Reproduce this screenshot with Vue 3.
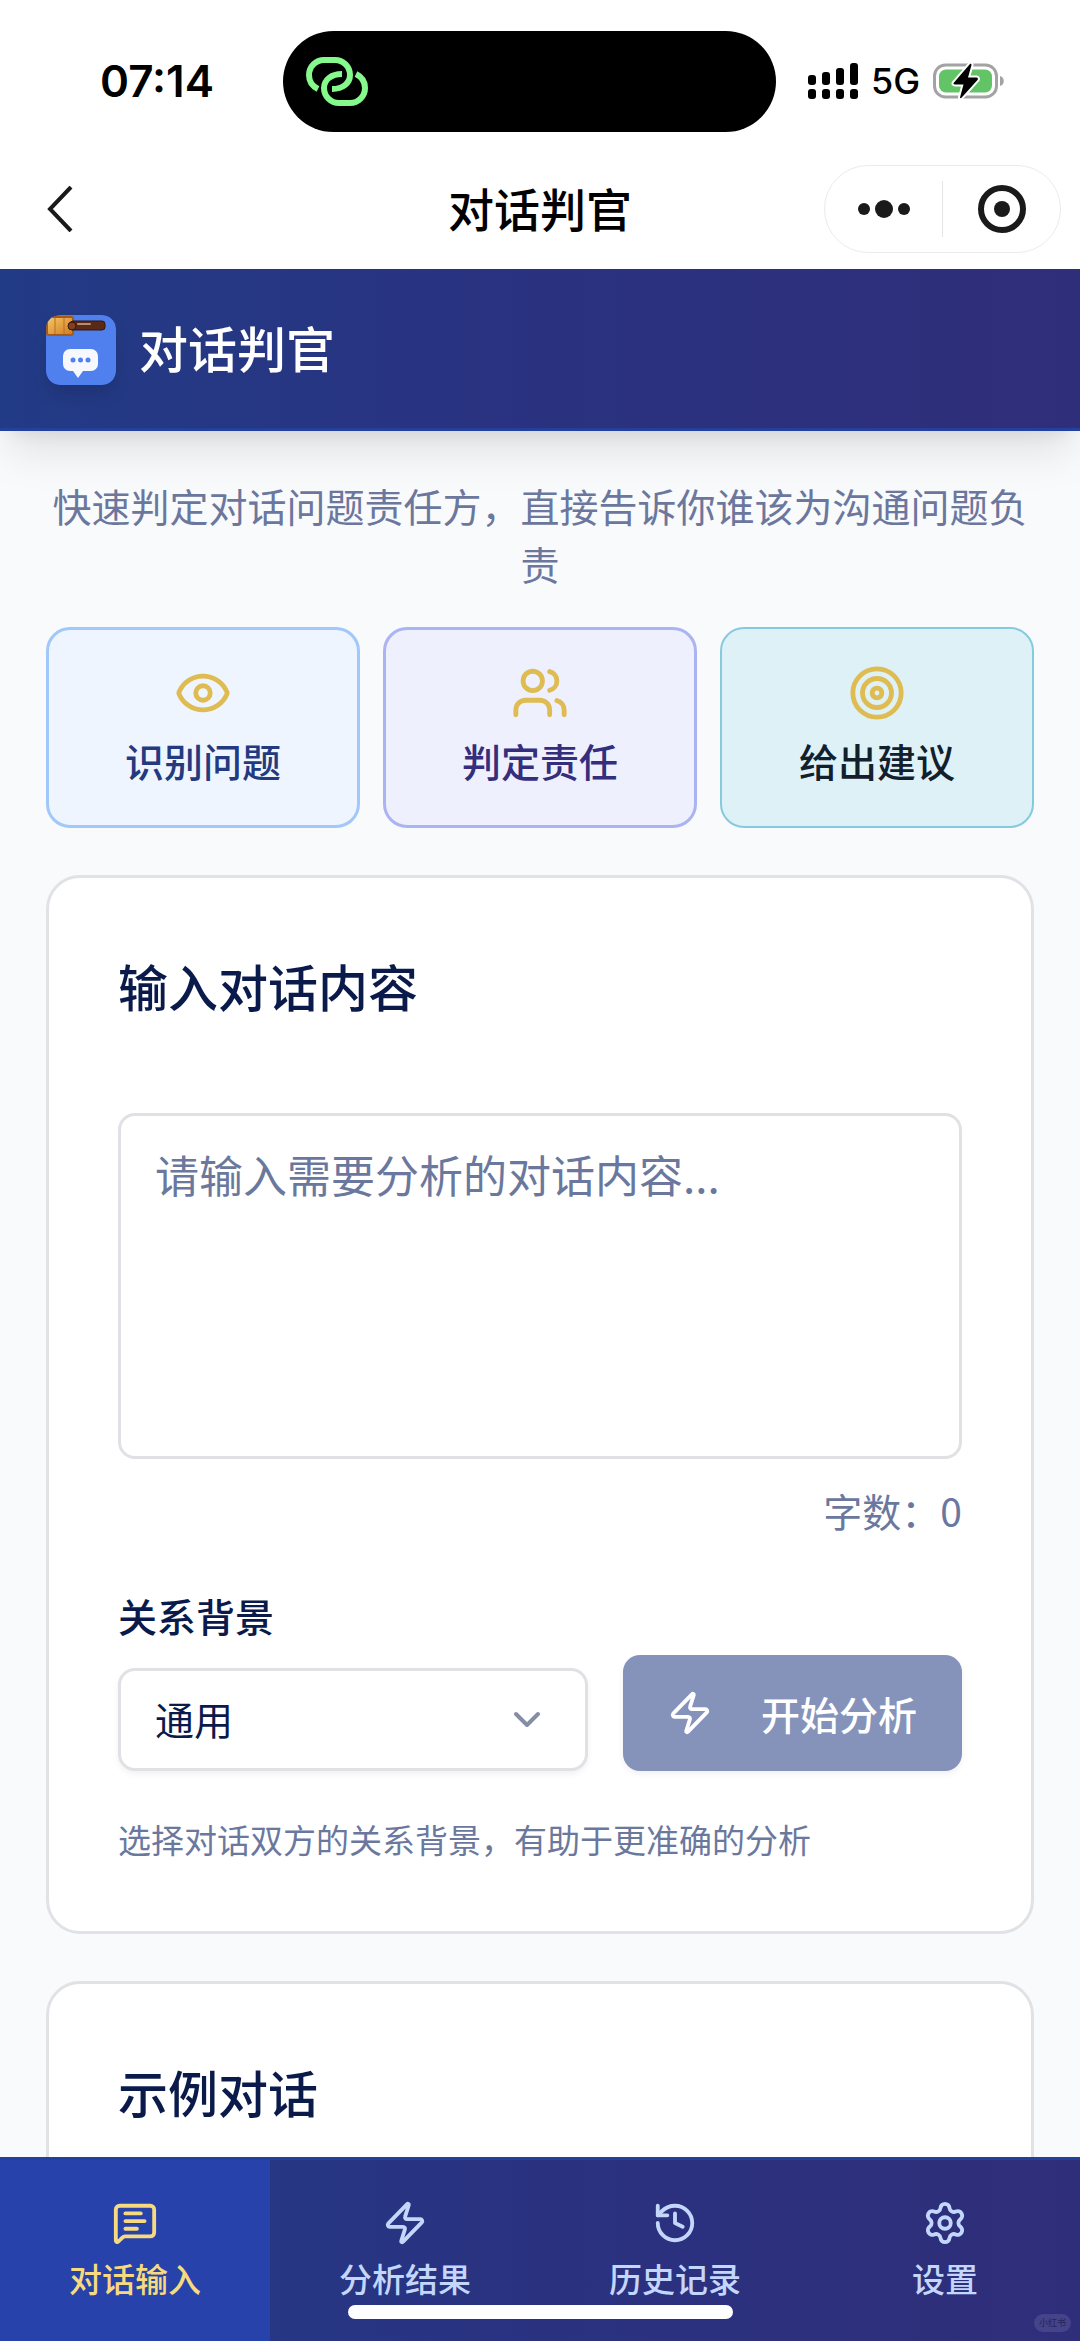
<script setup>
import { ref, computed } from 'vue'

const dialogue = ref('')
const relation = ref('general')
const activeTab = ref('input')
const wordCount = computed(() => dialogue.value.length)

const features = [
  {
    tone: 'blue',
    label: '识别问题',
    paths: [
      'M2.062 12.348a1 1 0 0 1 0-.696 10.75 10.75 0 0 1 19.876 0 1 1 0 0 1 0 .696 10.75 10.75 0 0 1-19.876 0'
    ],
    circles: [[12, 12, 3]]
  },
  {
    tone: 'indigo',
    label: '判定责任',
    paths: [
      'M16 21v-2a4 4 0 0 0-4-4H6a4 4 0 0 0-4 4v2',
      'M16 3.128a4 4 0 0 1 0 7.744',
      'M22 21v-2a4 4 0 0 0-3-3.87'
    ],
    circles: [[9, 7, 4]]
  },
  {
    tone: 'cyan',
    label: '给出建议',
    paths: [],
    circles: [[12, 12, 10], [12, 12, 6], [12, 12, 2]]
  }
]

const zap =
  'M4 14a1 1 0 0 1-.78-1.63l9.9-10.2a.5.5 0 0 1 .86.46l-1.92 6.02A1 1 0 0 0 13 10h7a1 1 0 0 1 .78 1.63l-9.9 10.2a.5.5 0 0 1-.86-.46l1.92-6.02A1 1 0 0 0 11 14z'

const tabs = [
  {
    id: 'input',
    label: '对话输入',
    paths: [
      'M22 17a2 2 0 0 1-2 2H6.828a2 2 0 0 0-1.414.586l-2.202 2.202A.71.71 0 0 1 2 21.286V5a2 2 0 0 1 2-2h16a2 2 0 0 1 2 2z',
      'M7 11h10',
      'M7 15h6',
      'M7 7h8'
    ]
  },
  { id: 'result', label: '分析结果', paths: [zap] },
  {
    id: 'history',
    label: '历史记录',
    paths: ['M3 12a9 9 0 1 0 9-9 9.75 9.75 0 0 0-6.74 2.74L3 8', 'M3 3v5h5', 'M12 7v5l4 2']
  },
  {
    id: 'settings',
    label: '设置',
    paths: [
      'M9.671 4.136a2.34 2.34 0 0 1 4.659 0 2.34 2.34 0 0 0 3.319 1.915 2.34 2.34 0 0 1 2.33 4.033 2.34 2.34 0 0 0 0 3.831 2.34 2.34 0 0 1-2.33 4.033 2.34 2.34 0 0 0-3.319 1.915 2.34 2.34 0 0 1-4.659 0 2.34 2.34 0 0 0-3.32-1.915 2.34 2.34 0 0 1-2.33-4.033 2.34 2.34 0 0 0 0-3.831A2.34 2.34 0 0 1 6.35 6.051a2.34 2.34 0 0 0 3.319-1.915',
      'M12 9a3 3 0 1 0 0 6 3 3 0 0 0 0-6'
    ]
  }
]
</script>

<template>
  <div class="screen">
    <div class="status">
      <div class="clock">07:14</div>
      <div class="island">
        <svg width="62" height="49" viewBox="0 0 62 49" fill="none" stroke="#86f98c" stroke-width="6">
          <path d="M12 32C6 29 3 24 3 18A15 15 0 0 1 18 3H29A15 15 0 0 1 44 18C44 26 37 32 26 32" />
          <path d="M50 17C56 20 59 25 59 31A15 15 0 0 1 44 46H33A15 15 0 0 1 18 31C18 23 25 17 36 17" />
        </svg>
      </div>
      <div class="signals">
        <svg width="50" height="36" viewBox="0 0 50 36">
          <rect x="0" y="12" width="8" height="10" rx="3" />
          <rect x="14" y="9" width="8" height="13" rx="3" />
          <rect x="28" y="5" width="8" height="17" rx="3" />
          <rect x="42" y="0" width="8" height="22" rx="3" />
          <rect x="0" y="26" width="8" height="10" rx="3" />
          <rect x="14" y="26" width="8" height="10" rx="3" />
          <rect x="28" y="26" width="8" height="10" rx="3" />
          <rect x="42" y="26" width="8" height="10" rx="3" />
        </svg>
        <span class="network">5G</span>
        <svg width="72" height="36" viewBox="0 0 72 36">
          <rect x="1.5" y="2" width="62" height="32" rx="11" fill="none" stroke="#a3a3a3" stroke-width="3" />
          <rect x="6" y="6.500" width="53" height="23" rx="7" fill="#62c466" />
          <path d="M67 13c5 1 5 9 0 10z" fill="#a3a3a3" />
          <path
            d="M37 1 21 19.500c-1 1-.5 2 1 2h8.500L27 34.500c0 1 .8 1 1.500.3L44.500 17c1-1 .4-2.500-1-2.500H35L38.500 2c.2-1-.8-1.800-1.500-1z"
            fill="#000"
            stroke="#fff"
            stroke-width="4"
            paint-order="stroke"
          />
        </svg>
      </div>
    </div>

    <div class="titlebar">
      <button class="back" type="button" aria-label="返回">
        <svg width="26" height="46" viewBox="0 0 26 46" fill="none" stroke="#1a1a1a" stroke-width="4">
          <path d="M24 1 3 23l21 22" />
        </svg>
      </button>
      <div class="page-title">对话判官</div>
      <div class="capsule">
        <button type="button" aria-label="更多">
          <svg width="52" height="20" viewBox="0 0 52 20" fill="#1a1a1a">
            <circle cx="6" cy="10" r="6" />
            <circle cx="26" cy="10" r="9" />
            <circle cx="46" cy="10" r="6" />
          </svg>
        </button>
        <span class="divider"></span>
        <button type="button" aria-label="关闭">
          <svg width="48" height="48" viewBox="0 0 48 48">
            <circle cx="24" cy="24" r="21" fill="none" stroke="#1a1a1a" stroke-width="6" />
            <circle cx="24" cy="24" r="8" fill="#1a1a1a" />
          </svg>
        </button>
      </div>
    </div>

    <header class="banner">
      <svg class="logo" width="70" height="70" viewBox="0 0 70 70">
        <defs>
          <linearGradient id="head" x1="0" y1="0" x2="1" y2="1">
            <stop offset="0" stop-color="#f6c766" />
            <stop offset="1" stop-color="#cf7a20" />
          </linearGradient>
        </defs>
        <rect width="70" height="70" rx="14" fill="#4f80ee" />
        <rect x="1" y="2" width="26" height="18" rx="2" fill="url(#head)" stroke="#a35a1c" stroke-width="2" />
        <path d="M9 3v16M18 3v16" stroke="#b86f22" stroke-width="1" />
        <rect x="24" y="6" width="35" height="9" rx="3" fill="#5a2a18" stroke="#35160e" stroke-width="1" />
        <circle cx="26" cy="11" r="4" fill="#80401f" stroke="#35160e" stroke-width="1" />
        <path d="M32 9h12" stroke="#b98a70" stroke-width="2" stroke-linecap="round" />
        <path
          d="M24 34h21a7 7 0 0 1 7 7v8a7 7 0 0 1-7 7h-8l-5 7-5-7h-3a7 7 0 0 1-7-7v-8a7 7 0 0 1 7-7z"
          fill="#f6f8fe"
        />
        <circle cx="27" cy="45" r="2.500" fill="#4f80ee" />
        <circle cx="34.500" cy="45" r="2.500" fill="#4f80ee" />
        <circle cx="42" cy="45" r="2.500" fill="#4f80ee" />
      </svg>
      <h1>对话判官</h1>
    </header>

    <main>
      <p class="intro">快速判定对话问题责任方，直接告诉你谁该为沟通问题负责</p>

      <ul class="features">
        <li v-for="f in features" :key="f.label" :class="f.tone">
          <svg class="line-icon" width="58" height="58" viewBox="0 0 24 24">
            <path v-for="d in f.paths" :key="d" :d="d" />
            <circle v-for="c in f.circles" :key="c[2]" :cx="c[0]" :cy="c[1]" :r="c[2]" />
          </svg>
          <span>{{ f.label }}</span>
        </li>
      </ul>

      <section class="card">
        <h2><label for="dialogue">输入对话内容</label></h2>
        <textarea id="dialogue" v-model="dialogue" placeholder="请输入需要分析的对话内容..."></textarea>
        <p class="count">字数：{{ wordCount }}</p>
        <div class="form-row">
          <div class="field">
            <label for="relation">关系背景</label>
            <div class="select-wrap">
              <select id="relation" v-model="relation">
                <option value="general">通用</option>
              </select>
              <svg class="chevron" width="28" height="18" viewBox="0 0 28 18">
                <path d="M3 3l11 11L25 3" />
              </svg>
            </div>
          </div>
          <button class="analyze" type="button" :disabled="!dialogue">
            <svg class="line-icon" width="46" height="46" viewBox="0 0 24 24"><path :d="zap" /></svg>
            <span>开始分析</span>
          </button>
        </div>
        <p class="hint">选择对话双方的关系背景，有助于更准确的分析</p>
      </section>

      <section class="card">
        <h2>示例对话</h2>
      </section>
    </main>

    <nav class="tabs">
      <button
        v-for="t in tabs"
        :key="t.id"
        type="button"
        :class="{ active: activeTab === t.id }"
        @click="activeTab = t.id"
      >
        <svg class="line-icon" width="46" height="46" viewBox="0 0 24 24">
          <path v-for="d in t.paths" :key="d" :d="d" />
        </svg>
        <span>{{ t.label }}</span>
      </button>
      <div class="home-bar"></div>
      <div class="mark">小红书</div>
    </nav>
  </div>
</template>

<style>
body {
  margin: 0;
  background: #f8fafc;
}
</style>

<style scoped>
.screen {
  display: flex;
  flex-direction: column;
  height: 100vh;
  background: #f8fafc;
  color: #0a1a4a;
  font-family: "Noto Sans CJK SC", sans-serif;
  font-size: 39px;
  line-height: 58px;
}

.screen * {
  box-sizing: border-box;
}

svg {
  display: block;
  flex: none;
}

button {
  margin: 0;
  padding: 0;
  border: 0;
  background: none;
  color: inherit;
  font: inherit;
}

h1,
h2,
p,
ul {
  margin: 0;
  padding: 0;
  font-weight: 400;
}

.line-icon {
  fill: none;
  stroke: currentColor;
  stroke-width: 2;
  stroke-linecap: round;
  stroke-linejoin: round;
}

.status {
  display: grid;
  grid-template-columns: 283fr 493fr 304fr;
  align-items: center;
  padding-top: 31px;
  background: #fff;
  color: #000;
  font-family: Inter, sans-serif;
}

.clock {
  padding: 0 69px 2px 0;
  text-align: right;
  font-size: 44px;
  font-weight: 600;
}

.island {
  display: flex;
  align-items: center;
  height: 101px;
  padding-left: 23px;
  border-radius: 51px;
  background: #000;
}

.signals {
  display: flex;
  align-items: center;
  gap: 13px;
  padding: 0 0 2px 32px;
}

.network {
  font-size: 36px;
  font-weight: 500;
}

.titlebar {
  display: grid;
  grid-template-columns: 1fr auto 1fr;
  align-items: center;
  padding: 33px 19px 16px;
  background: #fff;
}

.back {
  justify-self: start;
  margin-left: 28px;
}

.page-title {
  padding-bottom: 4px;
  color: #000;
  font-size: 46px;
  font-weight: 500;
}

.capsule {
  justify-self: end;
  display: flex;
  align-items: center;
  width: 237px;
  height: 88px;
  border: 1px solid #ebebeb;
  border-radius: 44px;
}

.capsule button {
  flex: 1;
  display: flex;
  justify-content: center;
}

.divider {
  width: 1px;
  height: 56px;
  background: #e5e5e5;
}

.banner {
  position: relative;
  z-index: 1;
  display: flex;
  align-items: center;
  gap: 23px;
  padding: 46px 46px 43px;
  border-bottom: 3px solid #23409c;
  background: linear-gradient(90deg, #223b86, #2a3280 50%, #2f2e7a);
  box-shadow: 0 28px 42px -8px rgba(0, 0, 0, 0.1), 0 11px 17px -11px rgba(0, 0, 0, 0.1);
}

.logo {
  border-radius: 14px;
  box-shadow: 0 11px 17px -3px rgba(0, 0, 0, 0.15);
}

h1 {
  padding-bottom: 7px;
  color: #fff;
  font-size: 49px;
  font-weight: 500;
}

main {
  flex: 1;
  min-height: 0;
  display: flex;
  flex-direction: column;
  gap: 47px;
  padding: 45px 46px 0;
  overflow-y: auto;
  scrollbar-width: none;
}

main > * {
  flex: none;
}

.intro {
  margin-bottom: -12px;
  color: #6b779c;
  text-align: center;
}

.features {
  display: grid;
  grid-template-columns: repeat(3, 1fr);
  gap: 23px;
  list-style: none;
}

.features li {
  display: flex;
  flex-direction: column;
  align-items: center;
  gap: 9px;
  padding: 34px 0 36px;
  border: 3px solid;
  border-radius: 24px;
  font-weight: 500;
}

.features svg {
  color: #dfbc52;
}

.features .blue {
  border-color: #a0c8f8;
  background: #eff5ff;
  color: #233a80;
}

.features .indigo {
  border-color: #abb4f2;
  background: #eef0fe;
  color: #352e7d;
}

.features .cyan {
  border-width: 2px;
  padding: 35px 0 37px;
  border-color: #86cade;
  background: #def1f7;
  color: #12202e;
}

.card {
  padding: 69px;
  border: 3px solid #e0e2e6;
  border-radius: 34px;
  background: #fff;
}

h2 {
  font-size: 50px;
  font-weight: 500;
  line-height: 76px;
}

textarea {
  display: block;
  width: 100%;
  height: 346px;
  margin: 90px 0 22px;
  padding: 25px 34px;
  border: 3px solid #dfe1e5;
  border-radius: 17px;
  background: #fff;
  color: inherit;
  font-family: inherit;
  font-size: 44px;
  line-height: 66px;
  resize: none;
}

textarea::placeholder {
  color: #6b789e;
  opacity: 1;
}

.count {
  color: #6b789e;
  text-align: right;
}

.form-row {
  display: flex;
  align-items: flex-end;
  gap: 35px;
  margin: 47px 0 45px;
}

.field {
  flex: 1;
}

.field > label {
  display: block;
  margin-bottom: 24px;
  font-weight: 500;
}

.select-wrap {
  position: relative;
}

select {
  display: block;
  appearance: none;
  width: 100%;
  height: 103px;
  padding: 0 34px 4px;
  border: 3px solid #dfe1e5;
  border-radius: 17px;
  background: #fff;
  box-shadow: 0 3px 6px rgba(0, 0, 0, 0.06);
  color: inherit;
  font: inherit;
}

.chevron {
  position: absolute;
  top: 43px;
  right: 47px;
  fill: none;
  stroke: #858da7;
  stroke-width: 4;
  stroke-linecap: round;
  stroke-linejoin: round;
  pointer-events: none;
}

.analyze {
  display: flex;
  align-items: center;
  gap: 48px;
  height: 116px;
  padding: 0 45px 0 44px;
  border-radius: 17px;
  background: #8593bb;
  box-shadow: 0 3px 6px rgba(0, 0, 0, 0.06);
  color: #fff;
  font-weight: 500;
}

.hint {
  color: #6b789e;
  font-size: 33px;
  line-height: 46px;
}

.tabs {
  position: relative;
  flex: none;
  display: grid;
  grid-template-columns: repeat(4, 1fr);
  border-top: 3px solid #23409c;
  background: linear-gradient(90deg, #223b86, #2a3280 50%, #2f2e7a);
  color: #c3d6fb;
}

.tabs button {
  display: flex;
  flex-direction: column;
  align-items: center;
  gap: 10px;
  padding: 40px 0 41px;
  font-size: 33px;
  font-weight: 500;
  line-height: 44px;
}

.tabs .active {
  background: #2742aa;
  color: #f7da7f;
}

.home-bar {
  position: absolute;
  bottom: 22px;
  left: 50%;
  width: 385px;
  height: 14px;
  margin-left: -192px;
  border-radius: 7px;
  background: #fff;
}

.mark {
  position: absolute;
  right: 9px;
  bottom: 9px;
  padding: 0 5px;
  border-radius: 9px;
  background: #45438a;
  color: #26245f;
  font-size: 9px;
  line-height: 18px;
}
</style>
